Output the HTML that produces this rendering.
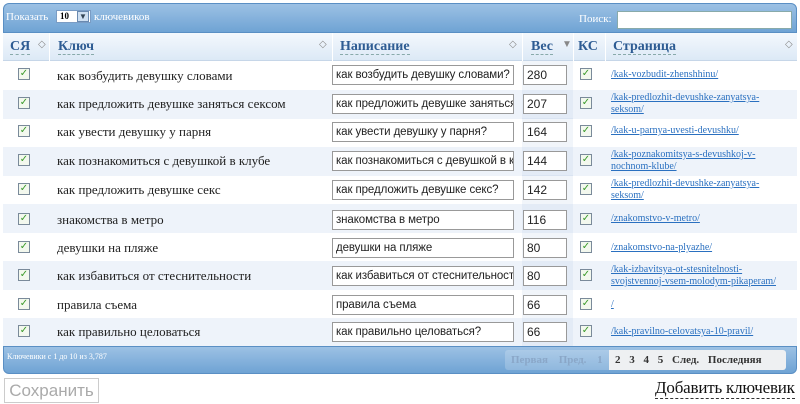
<!DOCTYPE html>
<html><head><meta charset="utf-8"><style>
*{box-sizing:border-box;margin:0;padding:0}
body{width:800px;height:404px;background:#fff;font-family:"Liberation Serif","DejaVu Serif",serif;position:relative;overflow:hidden}
.bar{position:absolute;left:3px;width:794px;background:linear-gradient(#9cc1e4,#6fa3d4);border:1px solid #5a8fc4}
.top{top:3px;height:30px;border-radius:6px 6px 0 0}
.bot{top:346px;height:28px;border-radius:0 0 6px 6px}
.abs{position:absolute}
.hdr{position:absolute;top:33px;left:3px;width:794px;height:28px;background:linear-gradient(#f4f8fd,#dce9f6);border-bottom:1px solid #c6d6e8}
.hdr span{position:absolute;top:6px;font-size:14px;color:#2e5c93;font-weight:bold;border-bottom:1px dashed #8aa;line-height:15px}
.hdr i{position:absolute;top:6px;font-style:normal;font-size:10px;color:#888}
.sep{position:absolute;top:0;width:1px;height:28px;background:#fff}
.row{position:absolute;left:3px;width:794px;height:29px;font-size:13px;color:#222}
.row.a{background:#eef3fa}
.cb{position:absolute;left:15px;width:12px;height:12px;border:1px solid #7a8a9a;background:#f3f8ee;color:#3a9a2a;font-size:10px;line-height:10px;text-align:center;font-family:"DejaVu Sans",sans-serif}
.key{position:absolute;left:54px}
.inp{position:absolute;left:329px;width:182px;height:20px;border:1px solid #999;background:#fff;font-family:"Liberation Sans",sans-serif;font-size:11.5px;padding:2px 3px;white-space:nowrap;overflow:hidden;line-height:14px;letter-spacing:-0.1px}
.w{position:absolute;left:520px;width:44px;height:20px;border:1px solid #999;background:#fff;font-family:"Liberation Sans",sans-serif;font-size:12px;padding:2px 3px;line-height:14px}
.vc{position:absolute;left:519px;width:51px;top:0;height:29px;background:rgba(180,200,225,.18)}
.lnk{position:absolute;left:608px;font-size:10px;color:#2a70c0;text-decoration:underline;line-height:12px}
</style></head><body>
<div class="bar top"></div>
<div class="abs" style="left:6px;top:11px;font-size:11px;color:#fff">Показать</div>
<div class="abs" style="left:56px;top:10px;width:35px;height:13px;background:#fff;border:1px solid #7a9cc4;font-size:9px;padding-left:3px;font-weight:bold">10</div>
<div class="abs" style="left:77px;top:11px;width:12px;height:11px;background:#cfe0f2;border:1px solid #6a8ab0;font-size:8px;text-align:center;color:#345">▼</div>
<div class="abs" style="left:94px;top:11px;font-size:11px;color:#fff">ключевиков</div>
<div class="abs" style="left:579px;top:13px;font-size:11px;color:#fff">Поиск:</div>
<div class="abs" style="left:617px;top:11px;width:175px;height:18px;background:#fff;border:1px solid #8aa"></div>
<div class="hdr">
<span style="left:7px">СЯ</span><i style="left:35px">◇</i>
<div class="sep" style="left:46px"></div>
<span style="left:55px">Ключ</span><i style="left:316px">◇</i>
<div class="sep" style="left:329px"></div>
<span style="left:337px">Написание</span><i style="left:506px">◇</i>
<div class="sep" style="left:519px"></div>
<span style="left:528px">Вес</span><i style="left:559px">▼</i>
<div class="sep" style="left:570px"></div>
<span style="left:575px;border:none">КС</span>
<div class="sep" style="left:602px"></div>
<span style="left:610px">Страница</span><i style="left:782px">◇</i>
</div>

<div class="row" style="top:61px"><div class="vc"></div><div class="cb" style="top:7px">✓</div><div class="key" style="top:7px">как возбудить девушку словами</div><div class="inp" style="top:4px">как возбудить девушку словами?</div><div class="w" style="top:4px">280</div><div class="cb" style="left:577px;top:7px">✓</div><div class="lnk" style="top:8px">/kak-vozbudit-zhenshhinu/</div></div>
<div class="row a" style="top:90px"><div class="vc"></div><div class="cb" style="top:7px">✓</div><div class="key" style="top:6px">как предложить девушке заняться сексом</div><div class="inp" style="top:4px">как предложить девушке заняться сексом?</div><div class="w" style="top:4px">207</div><div class="cb" style="left:577px;top:7px">✓</div><div class="lnk" style="top:2px">/kak-predlozhit-devushke-zanyatsya-<br>seksom/</div></div>
<div class="row" style="top:118px"><div class="vc"></div><div class="cb" style="top:7px">✓</div><div class="key" style="top:6px">как увести девушку у парня</div><div class="inp" style="top:4px">как увести девушку у парня?</div><div class="w" style="top:4px">164</div><div class="cb" style="left:577px;top:7px">✓</div><div class="lnk" style="top:7px">/kak-u-parnya-uvesti-devushku/</div></div>
<div class="row a" style="top:147px"><div class="vc"></div><div class="cb" style="top:7px">✓</div><div class="key" style="top:6px">как познакомиться с девушкой в клубе</div><div class="inp" style="top:4px">как познакомиться с девушкой в клубе?</div><div class="w" style="top:4px">144</div><div class="cb" style="left:577px;top:7px">✓</div><div class="lnk" style="top:2px">/kak-poznakomitsya-s-devushkoj-v-<br>nochnom-klube/</div></div>
<div class="row" style="top:175px"><div class="vc"></div><div class="cb" style="top:8px">✓</div><div class="key" style="top:7px">как предложить девушке секс</div><div class="inp" style="top:5px">как предложить девушке секс?</div><div class="w" style="top:5px">142</div><div class="cb" style="left:577px;top:8px">✓</div><div class="lnk" style="top:3px">/kak-predlozhit-devushke-zanyatsya-<br>seksom/</div></div>
<div class="row a" style="top:204px"><div class="vc"></div><div class="cb" style="top:9px">✓</div><div class="key" style="top:8px">знакомства в метро</div><div class="inp" style="top:6px">знакомства в метро</div><div class="w" style="top:6px">116</div><div class="cb" style="left:577px;top:9px">✓</div><div class="lnk" style="top:9px">/znakomstvo-v-metro/</div></div>
<div class="row" style="top:233px"><div class="vc"></div><div class="cb" style="top:8px">✓</div><div class="key" style="top:7px">девушки на пляже</div><div class="inp" style="top:5px">девушки на пляже</div><div class="w" style="top:5px">80</div><div class="cb" style="left:577px;top:8px">✓</div><div class="lnk" style="top:9px">/znakomstvo-na-plyazhe/</div></div>
<div class="row a" style="top:261px"><div class="vc"></div><div class="cb" style="top:8px">✓</div><div class="key" style="top:7px">как избавиться от стеснительности</div><div class="inp" style="top:5px">как избавиться от стеснительности</div><div class="w" style="top:5px">80</div><div class="cb" style="left:577px;top:8px">✓</div><div class="lnk" style="top:3px">/kak-izbavitsya-ot-stesnitelnosti-<br>svojstvennoj-vsem-molodym-pikaperam/</div></div>
<div class="row" style="top:290px"><div class="vc"></div><div class="cb" style="top:8px">✓</div><div class="key" style="top:7px">правила съема</div><div class="inp" style="top:5px">правила съема</div><div class="w" style="top:5px">66</div><div class="cb" style="left:577px;top:8px">✓</div><div class="lnk" style="top:9px">/</div></div>
<div class="row a" style="top:318px;height:28px"><div class="vc"></div><div class="cb" style="top:7px">✓</div><div class="key" style="top:6px">как правильно целоваться</div><div class="inp" style="top:4px">как правильно целоваться?</div><div class="w" style="top:4px">66</div><div class="cb" style="left:577px;top:7px">✓</div><div class="lnk" style="top:8px">/kak-pravilno-celovatsya-10-pravil/</div></div>

<div class="bar bot"></div>
<div class="abs" style="left:7px;top:352px;font-size:8px;color:#fff">Ключевики с 1 до 10 из 3,787</div>
<div class="abs" style="left:505px;top:350px;width:104px;height:20px;background:rgba(255,255,255,.2);border-radius:3px 0 0 3px;font-size:11px;color:#8aa7c8;font-weight:bold;padding:4px 0 0 6px;word-spacing:8px">Первая Пред. 1</div>
<div class="abs" style="left:609px;top:350px;width:177px;height:20px;background:#eef0f2;border-radius:0 3px 3px 0;font-size:11px;color:#333;font-weight:bold;padding:4px 0 0 6px;word-spacing:6px">2 3 4 5 След. Последняя</div>
<div class="abs" style="left:4px;top:378px;width:95px;height:25px;border:1px solid #ccc;background:#fff;font-family:'Liberation Sans',sans-serif;font-size:17px;color:#aaa;text-align:center;line-height:23px">Сохранить</div>
<div class="abs" style="left:655px;top:378px;font-size:17px;color:#111;border-bottom:1px dashed #333;line-height:20px;letter-spacing:-0.2px">Добавить ключевик</div>
</body></html>
